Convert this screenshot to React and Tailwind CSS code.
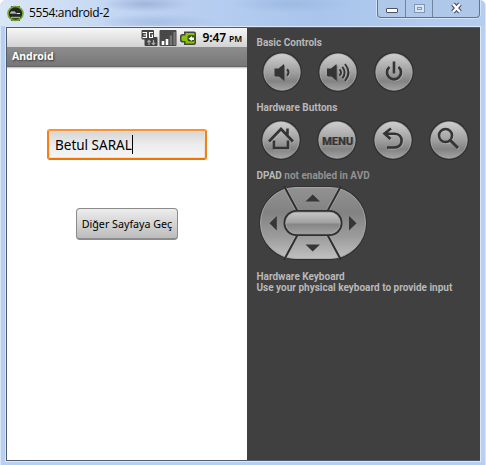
import React from "react";

function RoundButton({ label, children }) {
  return (
    <button aria-label={label} className="block h-10 w-10 shrink-0">
      <svg width="40" height="40" viewBox="0 0 40 40">
        <defs>
          <linearGradient id={"face-" + label} x1="0" y1="0" x2="0" y2="1">
            <stop offset="0" stopColor="#cecece" />
            <stop offset="0.5" stopColor="#a0a0a0" />
            <stop offset="0.75" stopColor="#838383" />
            <stop offset="1" stopColor="#a2a2a2" />
          </linearGradient>
        </defs>
        <circle cx="20" cy="20" r="20" fill="#323232" />
        <circle cx="20" cy="20" r="18.2" fill={"url(#face-" + label + ")"} stroke="#b8b8b8" strokeWidth="0.7" />
        <g transform="translate(0.9 0.9)" stroke="#bdbdbd" fill="none" opacity="0.5">{children}</g>
        <g stroke="#343434" fill="none">{children}</g>
      </svg>
    </button>
  );
}

function Dpad() {
  return (
    <svg width="110" height="76" viewBox="0 0 110 76" className="block">
      <defs>
        <linearGradient id="pad" x1="0" y1="0" x2="0" y2="1">
          <stop offset="0" stopColor="#929292" />
          <stop offset="0.35" stopColor="#828282" />
          <stop offset="0.7" stopColor="#9c9c9c" />
          <stop offset="1" stopColor="#c0c0c0" />
        </linearGradient>
        <linearGradient id="center" x1="0" y1="0" x2="0" y2="1">
          <stop offset="0" stopColor="#c6c6c6" />
          <stop offset="0.5" stopColor="#a0a0a0" />
          <stop offset="0.55" stopColor="#858585" />
          <stop offset="1" stopColor="#a0a0a0" />
        </linearGradient>
      </defs>
      <rect x="1" y="1" width="108" height="74" rx="37" fill="#303030" />
      <rect x="2.5" y="2.5" width="105" height="71" rx="35.5" fill="url(#pad)" stroke="#b0b0b0" strokeWidth="0.9" />
      <path d="M27 3 39.5 26M82 3 69.5 26M27 73 39.5 50M82 73 69.5 50" stroke="#bababa" strokeWidth="3.6" opacity="0.5" />
      <path d="M26 1 39.5 26M83 1 69.5 26M26 75 39.5 50M83 75 69.5 50" stroke="#303030" strokeWidth="2" />
      <rect x="25.5" y="25" width="59" height="26" rx="13" fill="#303030" />
      <rect x="27.7" y="27.2" width="54.6" height="21.6" rx="10.8" fill="url(#center)" stroke="#b5b5b5" strokeWidth="0.7" />
      <path d="M47.5 16.5h14.5L54.7 9.5zM47.5 59.5h14.5L54.7 66.5zM18.8 31v14.5L11.5 38.2zM91 31v14.5L98.5 38.2z" fill="#363636" />
    </svg>
  );
}

function MinimalPhone() {
  return (
    <section className="flex w-[240px] flex-col bg-white font-['Noto_Sans','Open_Sans',sans-serif] text-black">
      <div className="flex h-[19px] items-center justify-end bg-linear-to-b from-[#f7f7f7] to-[#d2d2d2] pr-[5px]">
        <svg width="57" height="18" viewBox="0 0 57 18" className="mr-[5px] shrink-0">
          <rect x="0.5" y="1" width="12.5" height="9.5" rx="1" fill="#454545" />
          <rect x="3.5" y="8" width="13" height="9" rx="1" fill="#424242" />
          <path d="M1.500 3.500H5.500v5H1.500M2.500 6H5.500M12 3.500H8.500v5H11.500V6H10.500" fill="none" stroke="#fff" strokeWidth="1.100" />
          <path d="M8 16v-4.500M6.300 13.200 8 11.300l1.700 1.900M12.500 11v4.500M10.800 13.800l1.700 1.900 1.700-1.900" fill="none" stroke="#aaa" strokeWidth="1.200" />
          <rect x="18.500" y="1" width="17" height="16" rx="1" fill="#484848" />
          <path d="M22 16v-4M26 16v-6" stroke="#fff" strokeWidth="2.600" />
          <path d="M29.900 16V6.500M33.500 16V3" stroke="#777" strokeWidth="2.300" />
          <path d="M43 2.500h10q2 0 2 2v9.500q0 2-2 2H43v-2.500h-1.500q-2.500 0-2.500-2.500V7.500Q39 5 41.500 5H43z" fill="#464646" />
          <path d="M44.500 4h8q1 0 1 1v8.500q0 1-1 1h-8V12H42q-1.500 0-1.500-1.500V8q0-1.500 1.500-1.500h2.500z" fill="#8cc40b" />
          <rect x="46.500" y="6" width="7.500" height="6.500" rx="2" fill="#3c5214" />
          <path d="M47.500 9.800 51 7v1.500h2V11h-2v1z" fill="#fff" />
        </svg>
        <span className="text-[12px] leading-none font-semibold tracking-[-0.100px] whitespace-pre">9:47<span className="ml-[3px] text-[8.500px]">PM</span></span>
      </div>
      <div className="flex h-[20px] items-center border-b border-[#666] bg-linear-to-b from-[#8d8d8d] to-[#777] pl-[5px] text-[10.500px] leading-none font-bold text-white [text-shadow:1px_1px_2px_#333]">Android</div>
      <div className="h-[2px] bg-linear-to-b from-[#bbb] to-white" />
      <div className="mt-[60px] ml-[40px] flex h-[31px] w-[160px] items-center rounded-[3px] border-[2px] border-t-[#ff9330] border-r-[#f58113] border-b-[#f27300] border-l-[#f58113] bg-linear-to-b from-[#d5d5d5] via-[#ececec] to-[#f5f5f5] pl-[6px] shadow-[inset_0_0_0_1px_#e5e1dc]">
        <span className="relative top-px text-[13.500px] leading-none">Betul SARAL</span>
        <span className="h-[19px] w-px bg-black" />
      </div>
      <button className="mt-[48px] ml-[69px] flex h-[32px] w-[102px] items-center justify-center rounded-[4px] border border-[#8b8b8b] border-b-[2px] bg-linear-to-b from-[#ededed] to-[#bcbcbc] pt-px text-[10.700px] leading-none whitespace-nowrap">Diğer Sayfaya Geç</button>
    </section>
  );
}

function Controls() {
  return (
    <section className="flex w-[233px] flex-col bg-[#404040] pl-[9.500px] font-[Roboto,sans-serif] text-[10px] leading-[11px] font-bold whitespace-nowrap text-[#b8b8b8]">
      <h2 className="mt-[9px]">Basic Controls</h2>
      <div className="mt-[4px] ml-[5.500px] flex gap-[16px]">
        <RoundButton label="volume-down">
          <path d="M12.500 16.500h4l5.500-4.500v16.500L16.500 24h-4z" fill="#343434" stroke="none" />
          <path d="M25 17.300q3 3 0 6.400" strokeWidth="2" />
        </RoundButton>
        <RoundButton label="volume-up">
          <path d="M9 16.500h4l5.500-4.500v16.500L13 24H9z" fill="#343434" stroke="none" />
          <path d="M21.500 17.300q3 3 0 6.400M24.300 14.800q4.800 5.500 0 11.400M27 12q7 8.500 0 17" strokeWidth="1.900" />
        </RoundButton>
        <RoundButton label="power">
          <path d="M20 9.500v12M15.500 15a7 7 0 1 0 9 0" strokeWidth="2.600" />
        </RoundButton>
      </div>
      <h2 className="mt-[10px]">Hardware Buttons</h2>
      <div className="mt-[7px] ml-[4.500px] flex gap-[16px]">
        <RoundButton label="home">
          <path d="M8 21.500 20 9 32 21.500M26.500 14.500V8.500M13 20.500V28h14v-7.500" strokeWidth="2.600" />
        </RoundButton>
        <RoundButton label="menu">
          <text x="20.500" y="24.500" textAnchor="middle" textLength="31" lengthAdjust="spacingAndGlyphs" fontSize="11.300" fontWeight="700" fill="#343434" stroke="none">MENU</text>
        </RoundButton>
        <RoundButton label="back">
          <path d="M18 8.500 11.500 13.500l6 5.500M12 13.700h9.500c9.500 0 9.500 13.800 0 13.800h-7.500" strokeWidth="2.600" />
        </RoundButton>
        <RoundButton label="search">
          <circle cx="16.500" cy="15.500" r="6.500" strokeWidth="2.500" />
          <path d="m21.500 20.500 7.500 7.500" strokeWidth="3" />
        </RoundButton>
      </div>
      <h2 className="mt-[10px]">DPAD <span className="text-[#929292]">not enabled in AVD</span></h2>
      <div className="mt-[4px] ml-[1.500px]"><Dpad /></div>
      <h2 className="mt-[10px]">Hardware Keyboard</h2>
      <p>Use your physical keyboard to provide input</p>
    </section>
  );
}

export default function App() {
  return (
    <main className="flex h-[465px] w-[486px] flex-col overflow-hidden rounded-t-[6px] border-x border-[#d9e6f7] bg-[#b7cff1]">
      <header className="flex h-[26px] shrink-0 items-start bg-[radial-gradient(ellipse_45px_8px_at_145px_4px,#a2b4da,transparent),radial-gradient(ellipse_60px_9px_at_290px_4px,#9dbbe3,transparent),radial-gradient(ellipse_60px_8px_at_155px_22px,#a8bee3,transparent),linear-gradient(90deg,#dae6f6,#bdd2f2_30%,#a9c5ec_65%,#b5cdef)] pl-[6px]">
        <svg width="17" height="17" viewBox="0 0 17 17" className="mt-[5px]">
          <path d="M4 1h9v15H4z" fill="#4a6622" />
          <ellipse cx="8.500" cy="8.500" rx="7.500" ry="7" fill="#252925" stroke="#78a536" strokeWidth="1.600" />
          <path d="M4 9v-2h4v2M6 7v2M9.500 8.500h3.500" fill="none" stroke="#e5e5e5" strokeWidth="1" />
          <path d="M4 12.500h9" stroke="#8fc440" strokeWidth="1.500" />
        </svg>
        <h1 className="mt-[5px] ml-[5px] font-['Open_Sans',sans-serif] text-[12px] leading-[16px] tracking-[-0.350px] text-black">5554:android-2</h1>
        <div className="mr-[5px] ml-auto flex h-[18px] w-[103px] overflow-hidden rounded-b-[4px] border border-t-0 border-[#61748e] bg-[#afc7e8] shadow-[0_0_0_1px_#d3e2f5]">
          <span className="flex w-[28px] justify-center border-r border-[#71849d] pt-[8px]"><span className="h-[5px] w-[12px] rounded-[1px] border border-[#4b5369] bg-white" /></span>
          <span className="flex w-[27px] justify-center border-r border-[#71849d] pt-[4px]"><span className="h-[9px] w-[11px] border border-[#8197b7] bg-[#d9e5f4] p-[2px]"><span className="block h-[3px] w-[5px] border border-[#8197b7]" /></span></span>
          <span className="flex flex-1 justify-center pt-[2px]">
            <svg width="13" height="12" viewBox="0 0 13 12"><path d="m3 2 7 8M10 2 3 10" stroke="#414b60" strokeWidth="4.500" /><path d="m3 2 7 8M10 2 3 10" stroke="#fff" strokeWidth="2.500" /></svg>
          </span>
        </div>
      </header>
      <div className="mx-[4px] flex h-[436px] shrink-0 border border-[#dce8f8] bg-[#dce8f8]">
        <div className="flex flex-1 border-y border-l border-[#515b6b]">
          <MinimalPhone />
          <Controls />
        </div>
      </div>
    </main>
  );
}
